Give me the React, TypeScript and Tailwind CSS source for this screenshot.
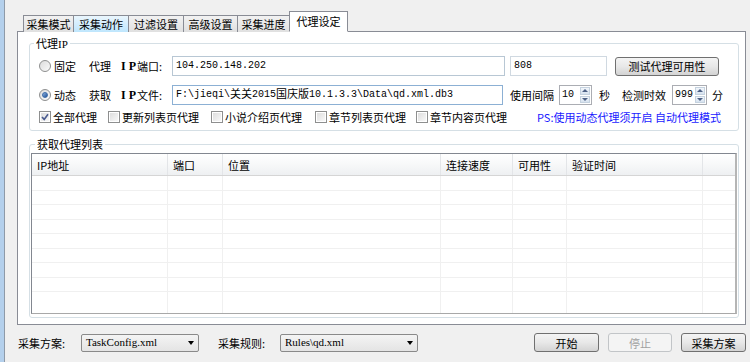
import type { ReactNode } from 'react';

const tabs = [
  { label: '采集模式', w: 'w-[51px]', state: 'normal' },
  { label: '采集动作', w: 'w-[56px]', state: 'hover' },
  { label: '过滤设置', w: 'w-[56px]', state: 'normal' },
  { label: '高级设置', w: 'w-[55px]', state: 'normal' },
  { label: '采集进度', w: 'w-[53px]', state: 'normal' },
  { label: '代理设定', w: 'w-[59px]', state: 'active' },
];

const columnas = [
  { label: 'IP地址', w: 'w-[136px]' },
  { label: '端口', w: 'w-[55px]' },
  { label: '位置', w: 'w-[218px]' },
  { label: '连接速度', w: 'w-[72px]' },
  { label: '可用性', w: 'w-[54px]' },
  { label: '验证时间', w: 'w-[136px]' },
  { label: '', w: 'flex-1' },
];

const filas = ['h-[15px]', 'h-[14px]', 'h-[15px]', 'h-[14px]', 'h-[15px]', 'h-[14px]', 'h-[15px]', 'h-[14px]', 'flex-1'];

const mono = "font-['Liberation_Mono','Noto_Sans_CJK_SC',monospace] text-[10px]";

function Radio({ checked }: { checked?: boolean }) {
  return (
    <span className="w-[12px] h-[12px] rounded-full border border-[#8e8f8f] bg-gradient-to-br from-[#dcdcdc] to-[#fbfbfb] flex items-center justify-center shrink-0">
      {checked && (
        <span className="w-[6px] h-[6px] rounded-full bg-gradient-to-br from-[#8fb4e0] to-[#1f4f96] border border-[#3a6aa8]" />
      )}
    </span>
  );
}

function Check({ checked }: { checked?: boolean }) {
  return (
    <span className="w-[12px] h-[12px] border border-[#8e8f8f] bg-white p-px shrink-0">
      <span className="block w-full h-full bg-gradient-to-br from-[#dedede] to-[#f8f8f8] relative">
        {checked && (
          <svg viewBox="0 0 8 8" className="absolute inset-0 w-full h-full">
            <path d="M1 4 L3.2 6.4 L7 1.2" fill="none" stroke="#4a5b8f" strokeWidth="1.6" />
          </svg>
        )}
      </span>
    </span>
  );
}

function Boton({ children, w, disabled }: { children: ReactNode; w: string; disabled?: boolean }) {
  return (
    <div
      className={`${w} h-[19px] rounded-[3px] border flex items-center justify-center ${
        disabled
          ? 'border-[#c2c5c8] bg-[#f4f4f4] text-[#a0a0a0]'
          : 'border-[#707070] bg-gradient-to-b from-[#f4f4f4] via-[#e8e8e8] to-[#d3d3d3] text-black'
      }`}
    >
      {children}
    </div>
  );
}

function Spinner({ valor, w }: { valor: string; w: string }) {
  return (
    <div className={`${w} h-[20px] border border-[#abadb3] bg-white flex`}>
      <div className={`flex-1 pl-[2px] flex items-center ${mono}`}>{valor}</div>
      <div className="w-[12px] flex flex-col gap-px p-px">
        <div className="flex-1 bg-gradient-to-b from-[#f2f6fb] to-[#d6e2ef] border border-[#c5d2df] flex items-center justify-center">
          <span className="w-0 h-0 border-l-[3px] border-r-[3px] border-b-[3px] border-l-transparent border-r-transparent border-b-[#4d6185]" />
        </div>
        <div className="flex-1 bg-gradient-to-b from-[#f2f6fb] to-[#d6e2ef] border border-[#c5d2df] flex items-center justify-center">
          <span className="w-0 h-0 border-l-[3px] border-r-[3px] border-t-[3px] border-l-transparent border-r-transparent border-t-[#4d6185]" />
        </div>
      </div>
    </div>
  );
}

function Combo({ valor, w }: { valor: string; w: string }) {
  return (
    <div className={`${w} h-[18px] rounded-[2px] border border-[#8a8a8a] bg-gradient-to-b from-[#f4f4f4] to-[#e4e4e4] flex items-center pl-[4px] pr-[4px]`}>
      <span className="flex-1 font-['Liberation_Serif',serif] text-[11px] leading-none">{valor}</span>
      <span className="w-0 h-0 border-l-[3px] border-r-[3px] border-t-[4px] border-l-transparent border-r-transparent border-t-black" />
    </div>
  );
}

function Etiqueta({ a, b }: { a: string; b: string }) {
  return (
    <span className="w-[83px] shrink-0 flex items-center">
      {a}
      <span className="ml-[10px] font-bold font-['Liberation_Serif',serif] text-[12px]">I</span>
      <span className="ml-[3px] mr-[1px] font-bold font-['Liberation_Serif',serif] text-[12px]">P</span>
      {b}
    </span>
  );
}

export default function App() {
  return (
    <div className="w-[750px] h-[362px] bg-[#f0f0f0] flex overflow-hidden font-['Noto_Sans_CJK_SC',sans-serif] text-[11px] leading-[14px] text-black">
      <div className="w-[4px] bg-[#b4d0ec]" />
      <div className="w-px bg-[#8e9aa8]" />
      <div className="flex-1 flex flex-col pl-[12px] pr-[4px]">
        {/* Pestañas */}
        <div className="h-[12px]" />
        <div className="h-[20px] flex items-end pl-[6px] relative z-10">
          {tabs.map((t) =>
            t.state === 'active' ? (
              <div
                key={t.label}
                className={`${t.w} h-[21px] bg-white border border-[#898c95] border-b-white flex items-center justify-center pb-[2px]`}
              >
                {t.label}
              </div>
            ) : (
              <div
                key={t.label}
                className={`${t.w} h-[17px] border border-[#898c95] border-b-0 -mr-px flex items-center justify-center ${
                  t.state === 'hover'
                    ? 'bg-gradient-to-b from-[#eaf6fd] to-[#bee6fd]'
                    : 'bg-gradient-to-b from-[#f2f2f2] to-[#e0e0e0]'
                }`}
              >
                {t.label}
              </div>
            )
          )}
        </div>

        {/* Panel */}
        <div className="h-[294px] -mt-px border border-[#898c95] bg-white pl-[11px] pr-[6px] pt-[4px]">
          <fieldset className="border border-[#d5dfe5] rounded-[3px] px-0 pb-[5px]">
            <legend className="ml-[4px] px-[2px] leading-[14px]">
              代理<span className="font-['Liberation_Serif',serif] text-[11px]">IP</span>
            </legend>
            <div className="flex flex-col pl-[9px]">
              <div className="mt-[5px] h-[20px] flex items-center">
                <Radio />
                <span className="ml-[3px] w-[35px]">固定</span>
                <Etiqueta a="代理" b="端口:" />
                <div className={`w-[333px] h-[20px] border border-[#b8c7d4] flex items-center pl-[3px] ${mono}`}>
                  104.250.148.202
                </div>
                <div className={`ml-[5px] w-[97px] h-[20px] border border-[#d0d9e1] flex items-center pl-[3px] ${mono}`}>
                  808
                </div>
                <div className="ml-[8px]">
                  <Boton w="w-[104px]">测试代理可用性</Boton>
                </div>
              </div>

              <div className="mt-[9px] h-[20px] flex items-center">
                <Radio checked />
                <span className="ml-[3px] w-[35px]">动态</span>
                <Etiqueta a="获取" b="文件:" />
                <div className={`w-[331px] h-[20px] border border-[#8cb0d4] flex items-center pl-[3px] ${mono}`}>
                  F:\jieqi\<span className="text-[11px]">关关</span>2015<span className="text-[11px]">国庆版</span>10.1.3.3\Data\qd.xml.db3
                </div>
                <span className="ml-[7px] w-[49px]">使用间隔</span>
                <Spinner valor="10" w="w-[33px]" />
                <span className="ml-[7px] w-[23px]">秒</span>
                <span className="w-[50px]">检测时效</span>
                <Spinner valor="999" w="w-[35px]" />
                <span className="ml-[5px]">分</span>
              </div>

              <div className="mt-[4px] h-[16px] flex items-center">
                <label className="w-[69px] flex items-center gap-[2px]">
                  <Check checked />
                  全部代理
                </label>
                <label className="w-[103px] flex items-center gap-[2px]">
                  <Check />
                  更新列表页代理
                </label>
                <label className="w-[104px] flex items-center gap-[2px]">
                  <Check />
                  小说介绍页代理
                </label>
                <label className="w-[101px] flex items-center gap-[2px]">
                  <Check />
                  章节列表页代理
                </label>
                <label className="w-[121px] flex items-center gap-[2px]">
                  <Check />
                  章节内容页代理
                </label>
                <span className="text-[#1a1aff]">PS:使用动态代理须开启 自动代理模式</span>
              </div>
            </div>
          </fieldset>

          <fieldset className="mt-[6px] border border-[#d5dfe5] rounded-[3px] pl-px pr-[1px] pb-[3px]">
            <legend className="ml-[4px] px-[2px] leading-[14px]">获取代理列表</legend>
            <div className="mt-[2px] h-[161px] border border-t-[#828790] border-l-[#828790] border-r-[2px] border-r-[#b5b5b5] border-b-[#a8a8a8] flex flex-col">
              <div className="h-[22px] flex bg-gradient-to-b from-white via-[#f7f8f9] to-[#eef0f2] border-b border-[#d5d5d5]">
                {columnas.map((c, i) => (
                  <div
                    key={i}
                    className={`${c.w} pl-[5px] flex items-center ${i < columnas.length - 1 ? 'border-r border-[#e3e5e8]' : ''}`}
                  >
                    {c.label}
                  </div>
                ))}
              </div>
              <div className="flex-1 flex flex-col">
                {filas.map((h, r) => (
                  <div key={r} className={`${h} flex ${r < filas.length - 1 ? 'border-b border-[#f0f0f0]' : ''}`}>
                    {columnas.map((c, i) => (
                      <div
                        key={i}
                        className={`${c.w} ${i < columnas.length - 1 ? 'border-r border-[#f0f0f0]' : ''}`}
                      />
                    ))}
                  </div>
                ))}
              </div>
            </div>
          </fieldset>
        </div>

        {/* Barra inferior */}
        <div className="flex-1 flex items-center pb-[2px]">
          <span className="ml-[1px] w-[63px]">采集方案:</span>
          <Combo valor="TaskConfig.xml" w="w-[118px]" />
          <span className="ml-[19px] w-[62px]">采集规则:</span>
          <Combo valor="Rules\qd.xml" w="w-[138px]" />
          <div className="ml-auto flex gap-[9px]">
            <Boton w="w-[65px]">开始</Boton>
            <Boton w="w-[64px]" disabled>
              停止
            </Boton>
            <Boton w="w-[65px]">采集方案</Boton>
          </div>
        </div>
      </div>
    </div>
  );
}
